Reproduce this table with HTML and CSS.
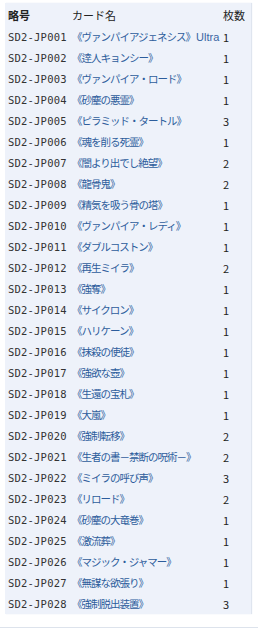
FILE: index.html
```html
<!DOCTYPE html>
<html lang="ja">
<head>
<meta charset="utf-8">
<link rel="stylesheet" href="styles.css">
</head>
<body>
<div class="wrap">
<table class="list">
<colgroup><col class="c-code"><col class="c-name"><col class="c-num"></colgroup>
<thead>
<tr><th class="h-code">略号</th><th>カード名</th><th>枚数</th></tr>
</thead>
<tbody>
<tr><td class="code">SD2-JP001</td><td class="name">《ヴァンパイアジェネシス》<span class="rarity">Ultra</span></td><td class="num">1</td></tr>
<tr><td class="code">SD2-JP002</td><td class="name">《逹人キョンシー》</td><td class="num">1</td></tr>
<tr><td class="code">SD2-JP003</td><td class="name">《ヴァンパイア・ロード》</td><td class="num">1</td></tr>
<tr><td class="code">SD2-JP004</td><td class="name">《砂塵の悪霊》</td><td class="num">1</td></tr>
<tr><td class="code">SD2-JP005</td><td class="name">《ピラミッド・タートル》</td><td class="num">3</td></tr>
<tr><td class="code">SD2-JP006</td><td class="name">《魂を削る死霊》</td><td class="num">1</td></tr>
<tr><td class="code">SD2-JP007</td><td class="name">《闇より出でし絶望》</td><td class="num">2</td></tr>
<tr><td class="code">SD2-JP008</td><td class="name">《龍骨鬼》</td><td class="num">2</td></tr>
<tr><td class="code">SD2-JP009</td><td class="name">《精気を吸う骨の塔》</td><td class="num">1</td></tr>
<tr><td class="code">SD2-JP010</td><td class="name">《ヴァンパイア・レディ》</td><td class="num">1</td></tr>
<tr><td class="code">SD2-JP011</td><td class="name">《ダブルコストン》</td><td class="num">1</td></tr>
<tr><td class="code">SD2-JP012</td><td class="name">《再生ミイラ》</td><td class="num">2</td></tr>
<tr><td class="code">SD2-JP013</td><td class="name">《強奪》</td><td class="num">1</td></tr>
<tr><td class="code">SD2-JP014</td><td class="name">《サイクロン》</td><td class="num">1</td></tr>
<tr><td class="code">SD2-JP015</td><td class="name">《ハリケーン》</td><td class="num">1</td></tr>
<tr><td class="code">SD2-JP016</td><td class="name">《抹殺の使徒》</td><td class="num">1</td></tr>
<tr><td class="code">SD2-JP017</td><td class="name">《強欲な壺》</td><td class="num">1</td></tr>
<tr><td class="code">SD2-JP018</td><td class="name">《生還の宝札》</td><td class="num">1</td></tr>
<tr><td class="code">SD2-JP019</td><td class="name">《大嵐》</td><td class="num">1</td></tr>
<tr><td class="code">SD2-JP020</td><td class="name">《強制転移》</td><td class="num">2</td></tr>
<tr><td class="code">SD2-JP021</td><td class="name">《生者の書－禁断の呪術－》</td><td class="num">2</td></tr>
<tr><td class="code">SD2-JP022</td><td class="name">《ミイラの呼び声》</td><td class="num">3</td></tr>
<tr><td class="code">SD2-JP023</td><td class="name">《リロード》</td><td class="num">2</td></tr>
<tr><td class="code">SD2-JP024</td><td class="name">《砂塵の大竜巻》</td><td class="num">1</td></tr>
<tr><td class="code">SD2-JP025</td><td class="name">《激流葬》</td><td class="num">1</td></tr>
<tr><td class="code">SD2-JP026</td><td class="name">《マジック・ジャマー》</td><td class="num">1</td></tr>
<tr><td class="code">SD2-JP027</td><td class="name">《無謀な欲張り》</td><td class="num">1</td></tr>
<tr><td class="code">SD2-JP028</td><td class="name">《強制脱出装置》</td><td class="num">3</td></tr>
</tbody>
</table>
</div>
<div class="rule"></div>
</body>
</html>
```
FILE: styles.css
```css
html, body {
  margin: 0;
  padding: 0;
  background: #ffffff;
}
body {
  font-family: "Noto Sans CJK JP", "Liberation Sans", sans-serif;
  font-size: 11px;
  color: #333333;
}
.wrap {
  padding: 3px 7px 0 5px;
}
.list {
  width: 246px;
  border-collapse: collapse;
  table-layout: fixed;
  background: #eef2fa;
  box-shadow: 1px 0 1px #dfe5ef;
}
.c-code { width: 64px; }
.c-name { width: 151px; }
.c-num { width: 31px; }
.list th {
  height: 23px;
  padding: 0 0 0 3px;
  text-align: left;
  font-weight: normal;
  color: #222222;
  white-space: nowrap;
}
.list th.h-code {
  font-weight: bold;
}
.list td {
  height: 21px;
  padding: 0 0 0 3px;
  white-space: nowrap;
  overflow: visible;
}
.code {
  font-family: "DejaVu Sans Mono", monospace;
  font-size: 10.5px;
  color: #333333;
  letter-spacing: 0.2px;
}
.name {
  color: #2d5d9c;
  font-size: 10.5px;
  letter-spacing: -1px;
}
.rarity {
  font-family: "Liberation Sans", sans-serif;
  font-size: 11px;
  letter-spacing: 0;
  margin-left: 1px;
  color: #3a66a3;
}
.num {
  padding-left: 7px;
  color: #222222;
}
.rule {
  margin-top: 13px;
  height: 1px;
  background: #dde3ec;
}
```
